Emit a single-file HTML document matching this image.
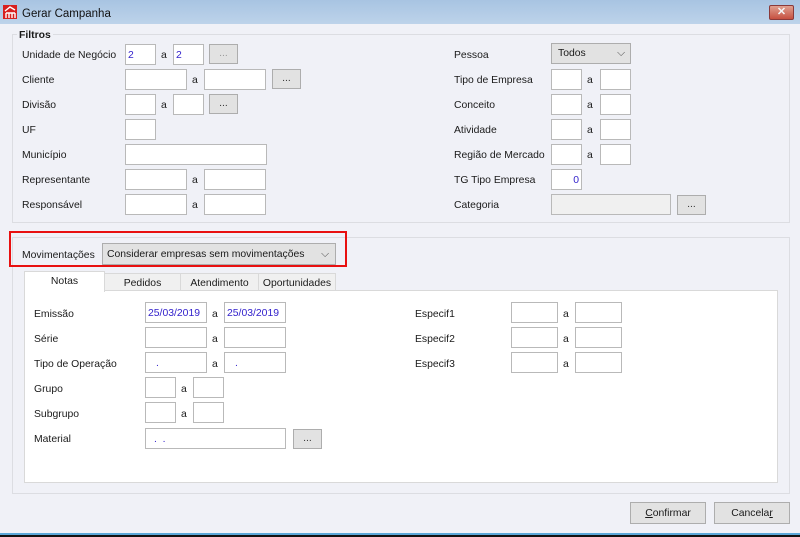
<!DOCTYPE html>
<html><head><meta charset="utf-8"><style>
*{box-sizing:border-box;margin:0;padding:0}
body{width:800px;height:537px;overflow:hidden;background:#f0f1f7;font-family:"Liberation Sans",sans-serif;font-size:10.4px;color:#1a1a1a;position:relative}
.a{position:absolute}
.t{position:absolute;line-height:14px;white-space:nowrap;margin-top:2px}
.i{position:absolute;height:21px;background:#fff;border:1px solid #b9b9b9;color:#3322cc;padding:4px 2px;line-height:13px}
.b{position:absolute;height:20px;background:#e2e2e2;border:1px solid #adadad;text-align:center;line-height:17px;color:#333}
.g{position:absolute;border:1px solid #dcdde2}
</style></head><body>
<div class="a" style="left:0;top:0;width:800px;height:24px;background:linear-gradient(#a8c4e2,#bdd3ea)"></div>
<svg class="a" style="left:3px;top:5px" width="14" height="14" viewBox="0 0 14 14"><rect width="14" height="14" fill="#d82020"/><path d="M2 6 L7 2 L12 5 M3 13 V8 M6 13 V8 M9 13 V8 M12 13 V8 M3 8 H12" stroke="#fff" stroke-width="1.4" fill="none"/></svg>
<div class="t" style="left:22px;top:5px;font-size:11.5px;color:#111">Gerar Campanha</div>
<div class="a" style="left:769px;top:5px;width:25px;height:15px;border:1px solid #8a3a3a;border-radius:2px;background:linear-gradient(#e0a090,#c65040);color:#f4f4f4;text-align:center;font-size:11px;line-height:13px;font-weight:bold">✕</div>

<div class="g" style="left:12px;top:34px;width:778px;height:189px"></div>
<div class="t" style="left:17px;top:27px;font-weight:bold;background:#f0f1f7;padding:0 2px">Filtros</div>

<div class="t" style="left:22px;top:47px">Unidade de Negócio</div>
<div class="i" style="left:125px;top:44px;width:31px">2</div><div class="t" style="left:161px;top:47px">a</div>
<div class="i" style="left:173px;top:44px;width:31px">2</div>
<div class="b" style="left:209px;top:44px;width:29px;color:#999">...</div>

<div class="t" style="left:22px;top:72px">Cliente</div>
<div class="i" style="left:125px;top:69px;width:62px"></div><div class="t" style="left:192px;top:72px">a</div>
<div class="i" style="left:204px;top:69px;width:62px"></div>
<div class="b" style="left:272px;top:69px;width:29px">...</div>

<div class="t" style="left:22px;top:97px">Divisão</div>
<div class="i" style="left:125px;top:94px;width:31px"></div><div class="t" style="left:161px;top:97px">a</div>
<div class="i" style="left:173px;top:94px;width:31px"></div>
<div class="b" style="left:209px;top:94px;width:29px">...</div>

<div class="t" style="left:22px;top:122px">UF</div>
<div class="i" style="left:125px;top:119px;width:31px"></div>

<div class="t" style="left:22px;top:147px">Município</div>
<div class="i" style="left:125px;top:144px;width:142px"></div>

<div class="t" style="left:22px;top:172px">Representante</div>
<div class="i" style="left:125px;top:169px;width:62px"></div><div class="t" style="left:192px;top:172px">a</div>
<div class="i" style="left:204px;top:169px;width:62px"></div>

<div class="t" style="left:22px;top:197px">Responsável</div>
<div class="i" style="left:125px;top:194px;width:62px"></div><div class="t" style="left:192px;top:197px">a</div>
<div class="i" style="left:204px;top:194px;width:62px"></div>

<div class="t" style="left:454px;top:47px">Pessoa</div>
<div class="b" style="left:551px;top:43px;width:80px;height:21px;text-align:left;padding-left:6px;color:#1a1a1a;line-height:19px">Todos<span style="position:absolute;right:5px;top:0;color:#555">⌵</span></div>
<div class="t" style="left:454px;top:72px">Tipo de Empresa</div>
<div class="i" style="left:551px;top:69px;width:31px"></div><div class="t" style="left:587px;top:72px">a</div><div class="i" style="left:600px;top:69px;width:31px"></div>
<div class="t" style="left:454px;top:97px">Conceito</div>
<div class="i" style="left:551px;top:94px;width:31px"></div><div class="t" style="left:587px;top:97px">a</div><div class="i" style="left:600px;top:94px;width:31px"></div>
<div class="t" style="left:454px;top:122px">Atividade</div>
<div class="i" style="left:551px;top:119px;width:31px"></div><div class="t" style="left:587px;top:122px">a</div><div class="i" style="left:600px;top:119px;width:31px"></div>
<div class="t" style="left:454px;top:147px">Região de Mercado</div>
<div class="i" style="left:551px;top:144px;width:31px"></div><div class="t" style="left:587px;top:147px">a</div><div class="i" style="left:600px;top:144px;width:31px"></div>
<div class="t" style="left:454px;top:172px">TG Tipo Empresa</div>
<div class="i" style="left:551px;top:169px;width:31px;text-align:right">0</div>
<div class="t" style="left:454px;top:197px">Categoria</div>
<div class="i" style="left:551px;top:194px;width:120px;background:#f0f0f0"></div>
<div class="b" style="left:677px;top:195px;width:29px">...</div>

<div class="g" style="left:12px;top:237px;width:778px;height:257px"></div>
<div class="a" style="left:9px;top:231px;width:338px;height:36px;border:2px solid #e81010"></div>
<div class="t" style="left:22px;top:247px">Movimentações</div>
<div class="b" style="left:102px;top:243px;width:234px;height:22px;text-align:left;padding-left:4px;color:#1a1a1a;line-height:21px">Considerar empresas sem movimentações<span style="position:absolute;right:6px;top:0;color:#555">⌵</span></div>

<div class="a" style="left:24px;top:290px;width:754px;height:193px;background:#fff;border:1px solid #d9d9d9"></div>
<div class="a" style="left:104px;top:273px;width:77px;height:18px;background:#f0f0f0;border:1px solid #d9d9d9;text-align:center;line-height:19px">Pedidos</div>
<div class="a" style="left:180px;top:273px;width:79px;height:18px;background:#f0f0f0;border:1px solid #d9d9d9;text-align:center;line-height:19px">Atendimento</div>
<div class="a" style="left:258px;top:273px;width:78px;height:18px;background:#f0f0f0;border:1px solid #d9d9d9;text-align:center;line-height:19px">Oportunidades</div>
<div class="a" style="left:24px;top:271px;width:81px;height:21px;background:#fff;border:1px solid #d9d9d9;border-bottom:none;text-align:center;line-height:19px">Notas</div>

<div class="t" style="left:34px;top:306px">Emissão</div>
<div class="i" style="left:145px;top:302px;width:62px">25/03/2019</div><div class="t" style="left:212px;top:306px">a</div>
<div class="i" style="left:224px;top:302px;width:62px">25/03/2019</div>
<div class="t" style="left:34px;top:331px">Série</div>
<div class="i" style="left:145px;top:327px;width:62px"></div><div class="t" style="left:212px;top:331px">a</div>
<div class="i" style="left:224px;top:327px;width:62px"></div>
<div class="t" style="left:34px;top:356px">Tipo de Operação</div>
<div class="i" style="left:145px;top:352px;width:62px;padding-left:10px">.</div><div class="t" style="left:212px;top:356px">a</div>
<div class="i" style="left:224px;top:352px;width:62px;padding-left:10px">.</div>
<div class="t" style="left:34px;top:381px">Grupo</div>
<div class="i" style="left:145px;top:377px;width:31px"></div><div class="t" style="left:181px;top:381px">a</div>
<div class="i" style="left:193px;top:377px;width:31px"></div>
<div class="t" style="left:34px;top:406px">Subgrupo</div>
<div class="i" style="left:145px;top:402px;width:31px"></div><div class="t" style="left:181px;top:406px">a</div>
<div class="i" style="left:193px;top:402px;width:31px"></div>
<div class="t" style="left:34px;top:431px">Material</div>
<div class="i" style="left:145px;top:428px;width:141px;padding-left:8px">.&nbsp;&nbsp;.</div>
<div class="b" style="left:293px;top:429px;width:29px">...</div>

<div class="t" style="left:415px;top:306px">Especif1</div>
<div class="i" style="left:511px;top:302px;width:47px"></div><div class="t" style="left:563px;top:306px">a</div>
<div class="i" style="left:575px;top:302px;width:47px"></div>
<div class="t" style="left:415px;top:331px">Especif2</div>
<div class="i" style="left:511px;top:327px;width:47px"></div><div class="t" style="left:563px;top:331px">a</div>
<div class="i" style="left:575px;top:327px;width:47px"></div>
<div class="t" style="left:415px;top:356px">Especif3</div>
<div class="i" style="left:511px;top:352px;width:47px"></div><div class="t" style="left:563px;top:356px">a</div>
<div class="i" style="left:575px;top:352px;width:47px"></div>

<div class="b" style="left:630px;top:502px;width:76px;height:22px;line-height:21px;color:#1a1a1a"><u>C</u>onfirmar</div>
<div class="b" style="left:714px;top:502px;width:76px;height:22px;line-height:21px;color:#1a1a1a">Cancela<u>r</u></div>

<div class="a" style="left:0;top:533px;width:800px;height:2px;background:#5aa7d8"></div>
<div class="a" style="left:0;top:535px;width:800px;height:2px;background:#111"></div>
</body></html>
